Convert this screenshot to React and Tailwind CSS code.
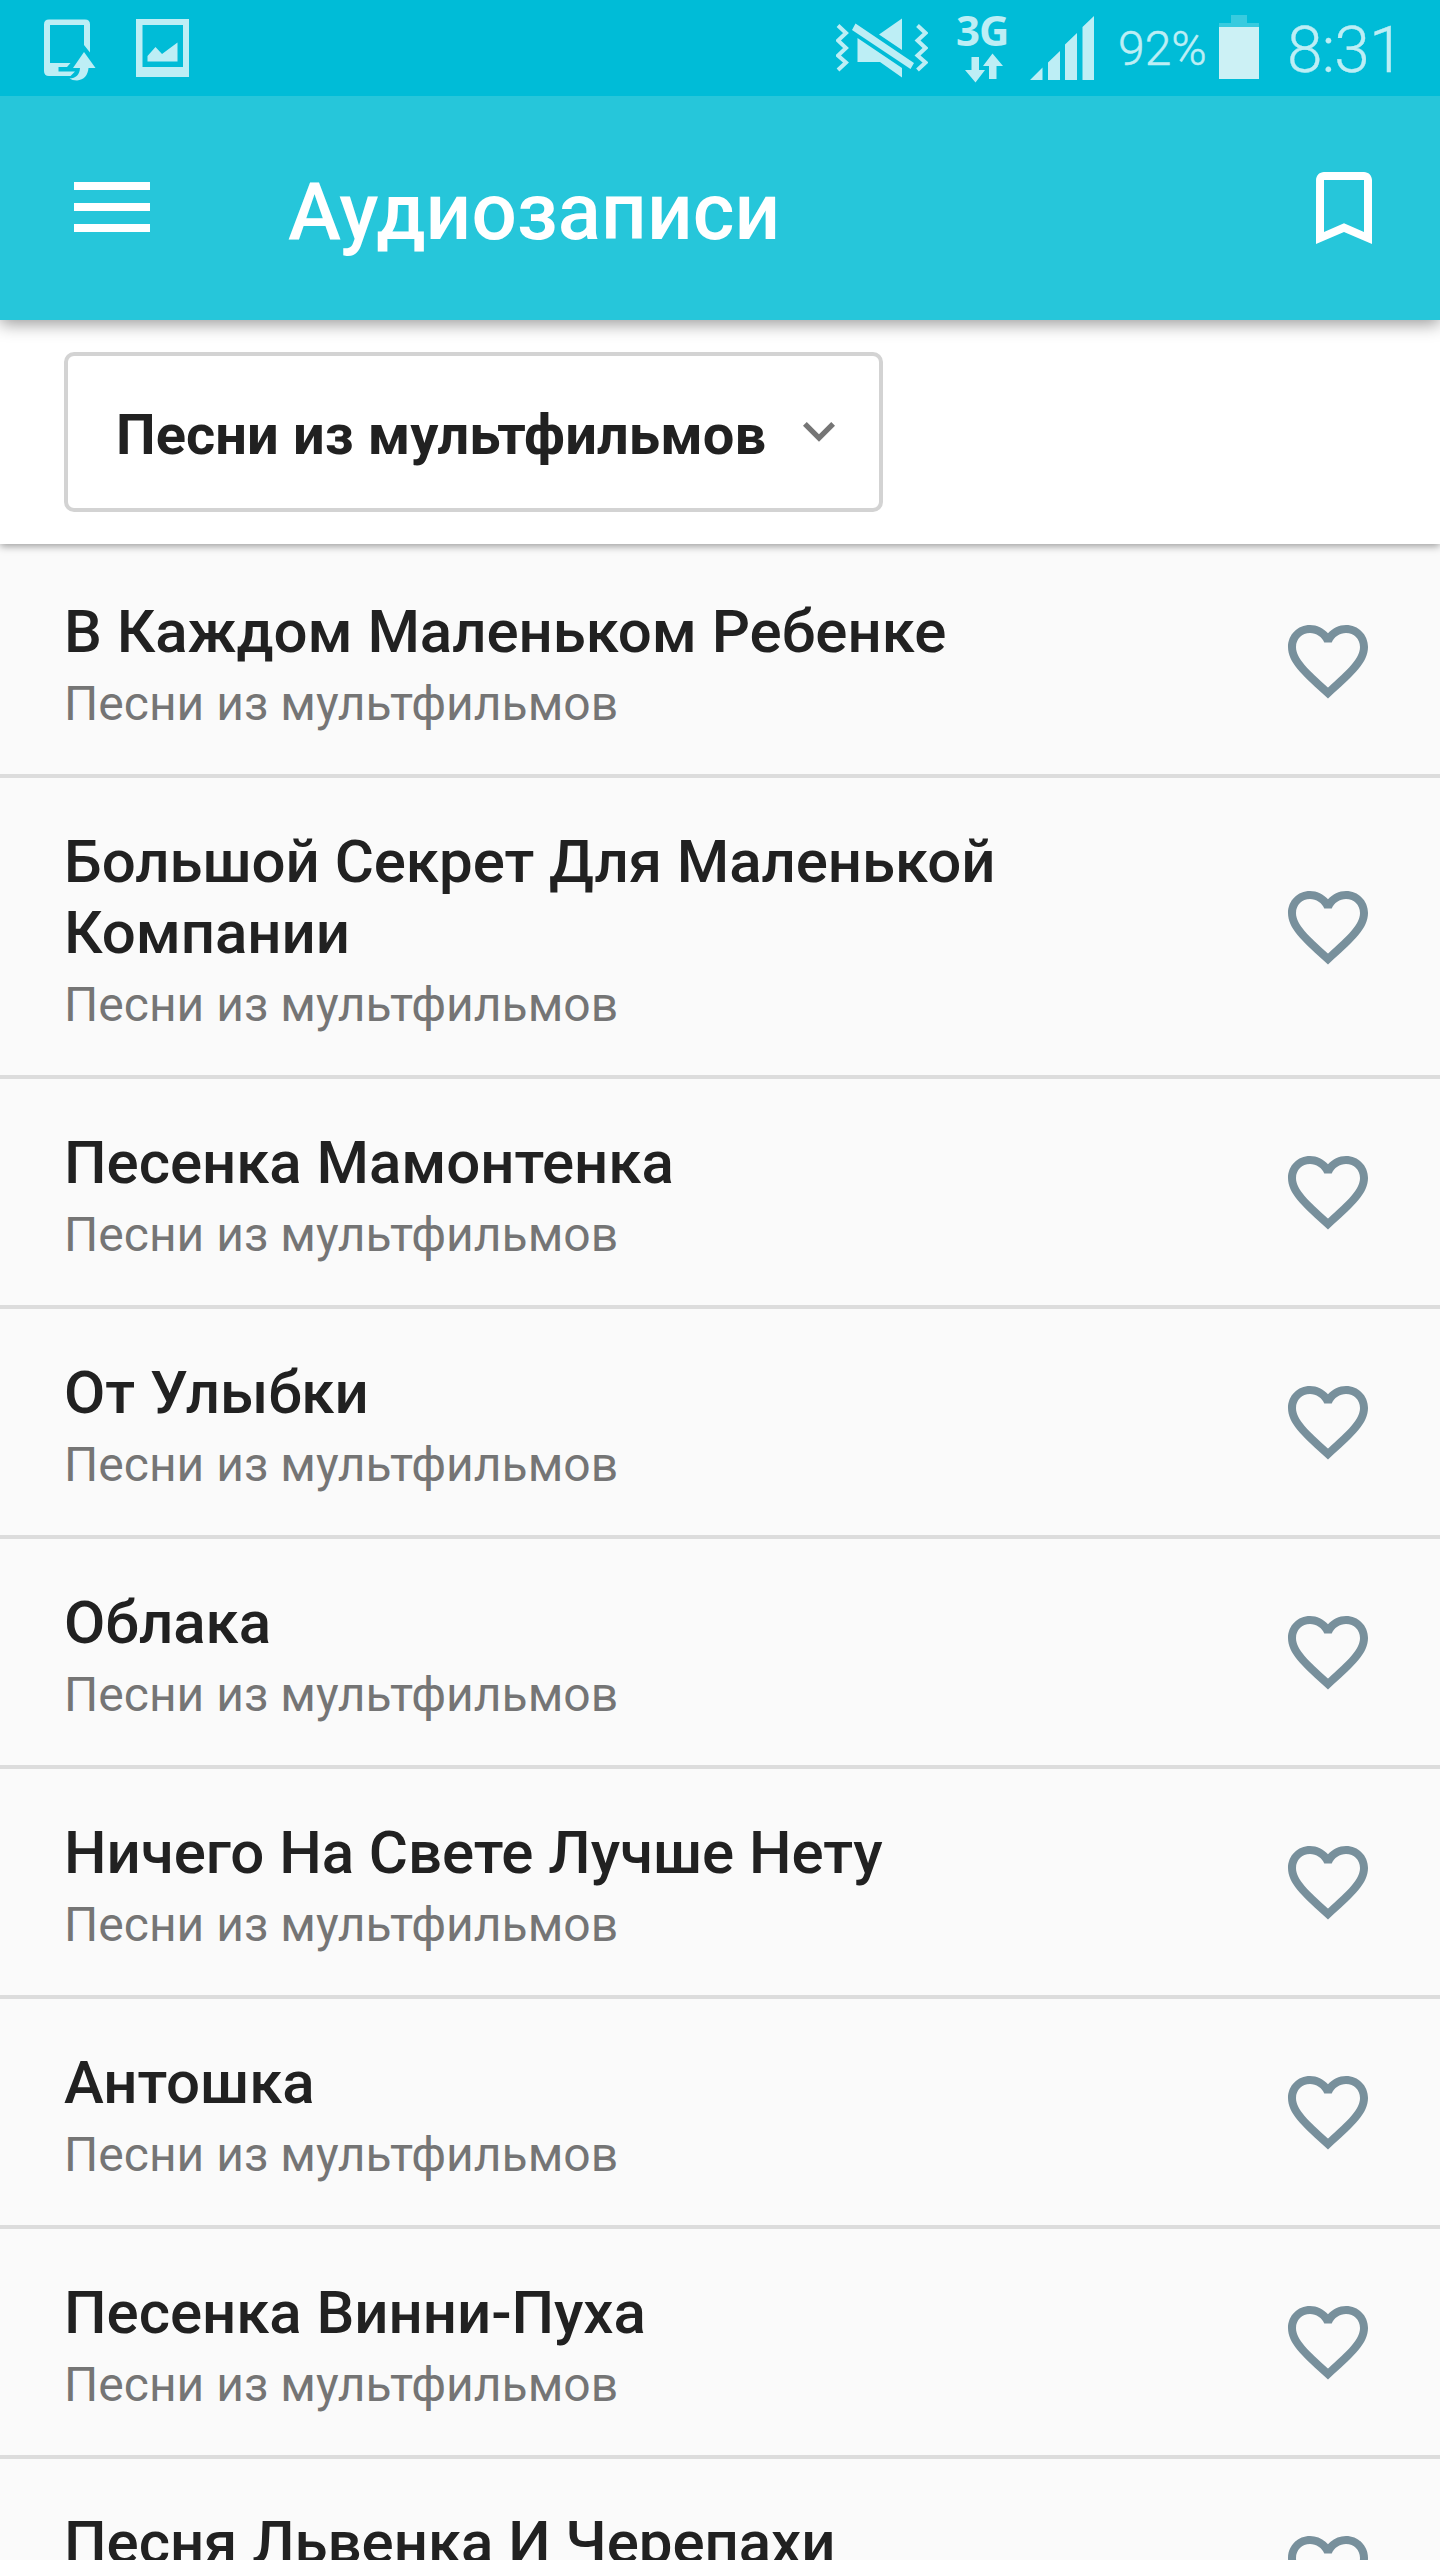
const songs = [
  "В Каждом Маленьком Ребенке",
  "Большой Секрет Для Маленькой Компании",
  "Песенка Мамонтенка",
  "От Улыбки",
  "Облака",
  "Ничего На Свете Лучше Нету",
  "Антошка",
  "Песенка Винни-Пуха",
  "Песня Львенка И Черепахи",
];

function StatusBar() {
  return (
    <div className="relative z-30 flex h-24 shrink-0 items-start bg-[#00bcd7] text-[#bdeef5]">
      <svg className="ml-11 mt-[19px] h-[62px] w-[52px] shrink-0" viewBox="44 19 52 62" fill="currentColor">
        <path fillRule="evenodd" d="M49 19.500H85Q90 19.500 90 24.500V52.500L84 45V25H50V63H70.500L67 67H58.500V71.500H75L70.500 76H49Q44 76 44 71V24.500Q44 19.500 49 19.500Z" />
        <path d="M84 52L95.500 68H88.500C88 75 84 80 77 80.500Q72 80.500 69.500 78.500C76 78 79.500 75 80 68H73Z" />
      </svg>
      <svg className="ml-10 mt-[19px] h-[58px] w-[53px] shrink-0" viewBox="136 19 53 58" fill="currentColor">
        <path fillRule="evenodd" d="M136 19H189V77H136ZM142.500 25V67H183V25Z" />
        <path d="M147.500 61.500V56L155.500 47L162 54L177.500 42.500V61.500Z" />
      </svg>
      <svg className="ml-[647px] mt-[18px] h-[60px] w-[92px] shrink-0" viewBox="836 18 92 60" fill="currentColor">
        <path d="M838 25.500L846 33L838 40.500L846 48L838 55.500L846 62.500L838 70M917.500 25.500L925.500 33L917.500 40.500L925.500 48L917.500 55.500L925.500 62.500L917.500 70" fill="none" stroke="currentColor" strokeWidth="4" />
        <path d="M855.500 23.500L914 63L910.500 69L852 30ZM902 18.500V50L879 34.500ZM857.500 38L902 68V77.500L880 62H857.500Z" />
      </svg>
      <div className="ml-[28px] flex h-24 w-[52px] shrink-0 flex-col items-start">
        <span className="mt-[2px] h-[51px] font-['Open_Sans'] text-[42px] font-bold leading-[56px] tracking-[-1px]">3G</span>
        <svg className="ml-[9px] h-[30px] w-[38px]" viewBox="965 53 38 30" fill="currentColor">
          <path d="M971.500 57H979V70H985L975.500 82.500L965 70H971.500ZM992.500 53.500L1003 66H996.500V79H989V66H983Z" />
        </svg>
      </div>
      <svg className="ml-[22px] mt-4 h-16 w-16 shrink-0" viewBox="1030 16 64 64" fill="currentColor">
        <path d="M1030 80L1042.500 67.500V80ZM1048 80V62.500L1060 51V80ZM1065 80V44.500L1077 33V80ZM1082.500 80V27L1094 16V80Z" />
      </svg>
      <span className="ml-6 mt-[21px] w-[90px] shrink-0 text-[48px] font-light leading-[56px] [-webkit-text-stroke:0.5px_currentColor]">92%</span>
      <div className="ml-[11px] mt-[15px] flex w-10 shrink-0 flex-col items-center">
        <div className="h-2 w-4 bg-[#38cbdf]" />
        <div className="h-1 w-10 bg-[#38cbdf]" />
        <div className="h-[52px] w-10 bg-[#ccf1f5]" />
      </div>
      <span className="ml-[28px] mt-[13px] shrink-0 text-[64px] font-light leading-[75px] tracking-[-0.8px] [-webkit-text-stroke:0.3px_currentColor]">8:31</span>
    </div>
  );
}

function AppBar() {
  return (
    <header className="relative z-20 flex h-56 shrink-0 items-center bg-[#26c6da] pl-[74px] pr-12 text-white shadow-[0_4px_16px_rgba(0,0,0,0.4)]">
      <div className="-mt-[2px] flex w-[76px] flex-col gap-[13px]">
        <div className="h-2 bg-white" />
        <div className="h-2 bg-white" />
        <div className="h-2 bg-white" />
      </div>
      <h1 className="ml-[138px] mt-[8px] grow text-[80px] font-medium leading-[94px] tracking-[0.1px]">Аудиозаписи</h1>
      <svg className="h-24 w-24" viewBox="0 0 24 24" fill="currentColor">
        <path d="M17 3H7c-1.100 0-1.990.9-1.990 2L5 21l7-3 7 3V5c0-1.100-.9-2-2-2zm0 15l-5-2.180L7 18V5h10v13z" />
      </svg>
    </header>
  );
}

function CategoryPicker() {
  return (
    <div className="relative z-10 flex h-56 shrink-0 items-center bg-white px-16 shadow-[0_2px_8px_rgba(0,0,0,0.4)]">
      <button className="flex h-40 w-[819px] items-center rounded-[10px] border-4 border-[#d3d3d3] pl-12 text-[56px] font-bold leading-[66px] text-[#212121]">
        <span className="mt-1.5 w-[687px] shrink-0 whitespace-nowrap text-left tracking-[0.1px]">Песни из мультфильмов</span>
        <svg className="h-5 w-8" viewBox="0 0 32 20" fill="#757575">
          <path d="M3.760 0L16 12.240L28.240 0L32 3.760L16 19.760L0 3.760Z" />
        </svg>
      </button>
    </div>
  );
}

function SongRow({ title }) {
  return (
    <li className="flex shrink-0 items-center border-b-4 border-[#dcdcdc] pl-16 pr-16">
      <div className="w-[1040px] pb-[42px] pt-12">
        <div className="text-[60px] font-medium leading-[71px] tracking-[-0.05px] text-[#212121]">{title}</div>
        <div className="mt-[9px] text-[48px] leading-[56px] tracking-[0.03px] text-[#757575]">Песни из мультфильмов</div>
      </div>
      <svg className="ml-auto h-24 w-24" viewBox="0 0 24 24" fill="#78909c">
        <path d="M16.500 3c-1.740 0-3.410.81-4.500 2.090C10.910 3.810 9.240 3 7.500 3 4.420 3 2 5.420 2 8.500c0 3.780 3.400 6.860 8.550 11.540L12 21.350l1.450-1.320C18.600 15.360 22 12.280 22 8.500 22 5.420 19.580 3 16.500 3zm-4.400 15.550l-.1.1-.1-.1C7.140 14.240 4 11.390 4 8.500 4 6.500 5.500 5 7.500 5c1.540 0 3.040.99 3.570 2.360h1.870C13.460 5.990 14.960 5 16.500 5c2 0 3.500 1.500 3.500 3.500 0 2.890-3.140 5.740-7.900 10.050z" />
      </svg>
    </li>
  );
}

export default function App() {
  return (
    <div className="flex h-[2560px] w-[1440px] flex-col overflow-hidden bg-[#fafafa] font-['Roboto',sans-serif]">
      <StatusBar />
      <AppBar />
      <CategoryPicker />
      <ul className="flex flex-col pt-1">
        {songs.map((title) => (
          <SongRow key={title} title={title} />
        ))}
      </ul>
    </div>
  );
}
